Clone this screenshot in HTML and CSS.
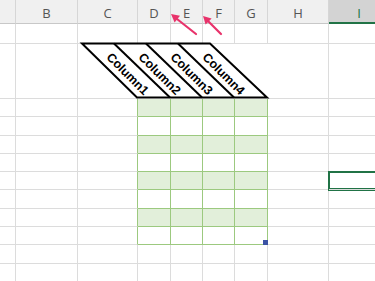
FILE: index.html
```html
<!DOCTYPE html>
<html lang="en">
<head>
  <meta charset="UTF-8" />
  <title>Rotated table headers</title>
  <link rel="stylesheet" href="styles.css">
</head>
<body>
  <div class="sheet">
    <!-- column letters -->
    <div class="hd"></div>
    <div class="hd">B</div>
    <div class="hd">C</div>
    <div class="hd">D</div>
    <div class="hd">E</div>
    <div class="hd">F</div>
    <div class="hd">G</div>
    <div class="hd">H</div>
    <div class="hd hd-sel">I</div>

    <!-- row 1 -->
    <div class="c"></div><div class="c"></div><div class="c"></div><div class="c"></div><div class="c"></div><div class="c"></div><div class="c"></div><div class="c"></div><div class="c"></div>

    <!-- row 2: slanted table headers (drawn in the svg below) -->
    <div class="c"></div><div class="c"></div><div class="c"></div>
    <div class="head-cells"></div>
    <div class="c"></div><div class="c"></div>

    <!-- table body -->
    <div class="c"></div><div class="c"></div><div class="c tl"></div><div class="t band"></div><div class="t band"></div><div class="t band"></div><div class="t band"></div><div class="c"></div><div class="c"></div>
    <div class="c"></div><div class="c"></div><div class="c tl"></div><div class="t"></div><div class="t"></div><div class="t"></div><div class="t"></div><div class="c"></div><div class="c"></div>
    <div class="c"></div><div class="c"></div><div class="c tl"></div><div class="t band"></div><div class="t band"></div><div class="t band"></div><div class="t band"></div><div class="c"></div><div class="c"></div>
    <div class="c"></div><div class="c"></div><div class="c tl"></div><div class="t"></div><div class="t"></div><div class="t"></div><div class="t"></div><div class="c"></div><div class="c"></div>
    <div class="c"></div><div class="c"></div><div class="c tl"></div><div class="t band"></div><div class="t band"></div><div class="t band"></div><div class="t band"></div><div class="c"></div><div class="c sel"></div>
    <div class="c"></div><div class="c"></div><div class="c tl"></div><div class="t"></div><div class="t"></div><div class="t"></div><div class="t"></div><div class="c"></div><div class="c"></div>
    <div class="c"></div><div class="c"></div><div class="c tl"></div><div class="t band"></div><div class="t band"></div><div class="t band"></div><div class="t band"></div><div class="c"></div><div class="c"></div>
    <div class="c"></div><div class="c"></div><div class="c tl"></div><div class="t"></div><div class="t"></div><div class="t"></div><div class="t last"><span class="handle"></span></div><div class="c"></div><div class="c"></div>

    <!-- empty rows below -->
    <div class="c"></div><div class="c"></div><div class="c"></div><div class="c"></div><div class="c"></div><div class="c"></div><div class="c"></div><div class="c"></div><div class="c"></div>
    <div class="c"></div><div class="c"></div><div class="c"></div><div class="c"></div><div class="c"></div><div class="c"></div><div class="c"></div><div class="c"></div><div class="c"></div>

    <svg class="overlay" width="375" height="110" viewBox="0 0 375 110">
      <!-- slanted header block -->
      <polygon class="slant" points="82,43.5 210,43.5 267,97.5 137,97.5" />
      <line class="slant" x1="114" y1="43.5" x2="170" y2="97.5" />
      <line class="slant" x1="146" y1="43.5" x2="202" y2="97.5" />
      <line class="slant" x1="178" y1="43.5" x2="234" y2="97.5" />
      <text class="col-name" transform="translate(127.5 74) rotate(45)">Column1</text>
      <text class="col-name" transform="translate(159.5 74) rotate(45)">Column2</text>
      <text class="col-name" transform="translate(191.5 74) rotate(45)">Column3</text>
      <text class="col-name" transform="translate(223.5 74) rotate(45)">Column4</text>

      <!-- pointer arrows -->
      <line class="arrow" x1="196" y1="34" x2="177" y2="19" />
      <polygon class="arrow-head" points="171,14 180,15.8 174.6,22.4" />
      <line class="arrow" x1="221" y1="34" x2="208" y2="21" />
      <polygon class="arrow-head" points="203,16 211.6,18.6 205.6,24.6" />
    </svg>
  </div>
</body>
</html>
```

FILE: styles.css
```css
* { box-sizing: border-box; margin: 0; padding: 0; }
body {
  background: #fff;
  overflow: hidden;
  font-family: "Open Sans", "Liberation Sans", sans-serif;
}
.sheet {
  position: relative;
  display: grid;
  grid-template-columns: 16px 62px 60px 33px 32px 32px 33px 61px 61px;
  grid-template-rows: 24px 20px 55px repeat(10, 18.3px);
  width: 390px;
}
.hd {
  background: #f0f0f0;
  border-right: 1px solid #d6d6d6;
  border-bottom: 1px solid #c8c8c8;
  color: #555;
  font-size: 13px;
  line-height: 26px;
  text-align: center;
}
.hd-sel {
  background: #d3d3d3;
  border-bottom: 2px solid #217346;
  color: #217346;
}
.c {
  border-right: 1px solid #dcdcdc;
  border-bottom: 1px solid #dcdcdc;
}
.c.tl { border-right-color: #9cc97f; }
.head-cells {
  grid-column: span 4;
  background: #fff;
}
.t {
  border-right: 1px solid #9cc97f;
  border-bottom: 1px solid #9cc97f;
}
.t.band { background: #e2efda; }
.t.last { position: relative; }
.handle {
  position: absolute;
  right: -1px; bottom: -1px;
  width: 5px; height: 5px;
  background: #3b53a4;
}
.sel {
  position: relative;
  z-index: 1;
  box-shadow: 0 0 0 1px #217346, inset 0 0 0 1px #217346;
}
.overlay {
  position: absolute;
  left: 0; top: 0;
  pointer-events: none;
  z-index: 2;
}
.slant {
  fill: #fff;
  stroke: #000;
  stroke-width: 2;
}
line.slant { fill: none; }
.col-name {
  font-family: "Liberation Sans", Arial, sans-serif;
  font-weight: bold;
  font-size: 12.5px;
  text-anchor: middle;
  dominant-baseline: central;
}
.arrow {
  stroke: #e8336b;
  stroke-width: 2.2;
  stroke-linecap: round;
}
.arrow-head { fill: #e8336b; }
```
